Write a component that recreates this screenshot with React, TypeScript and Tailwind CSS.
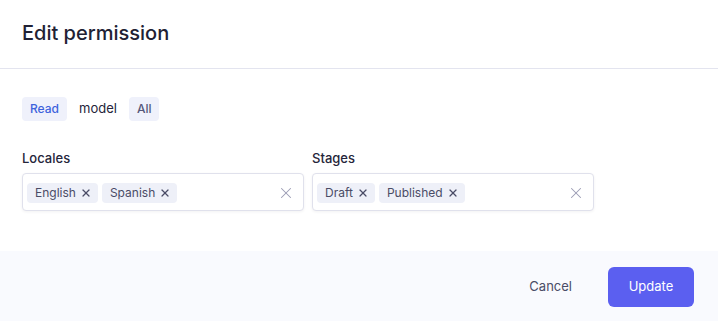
import { X } from "lucide-react";

const Tag = ({ label }: { label: string }) => (
  <span className="flex h-5 items-center gap-[4px] rounded bg-[#eef0f8] pl-2 pr-[6px] text-[12px] text-[#4a4c66]">
    {label}
    <X size={12} strokeWidth={2.4} className="text-[#4a4c66]" />
  </span>
);

const MultiSelect = ({ label, values }: { label: string; values: string[] }) => (
  <div className="flex w-[282px] flex-col">
    <span className="mb-[8px] h-[14px] text-[13px] leading-[14px] font-medium text-[#25253a]">{label}</span>
    <div className="flex h-[38px] items-center rounded border border-[#e0e1ec] bg-white pl-[4px] pr-[8px] pt-[1px] shadow-[0_1px_3px_rgba(33,33,52,0.06)]">
      <div className="flex flex-1 items-center gap-1">
        {values.map((v) => (
          <Tag key={v} label={v} />
        ))}
      </div>
      <X size={18} strokeWidth={1.4} className="text-[#9a9bb3]" />
    </div>
  </div>
);

export default function App() {
  return (
    <div className="flex h-[321px] w-[718px] flex-col bg-white font-['Inter',sans-serif]">
      <div className="flex h-[69px] items-center border-b border-[#e3e4ef] px-[22px] pb-[3px]">
        <h1 className="text-[20px] font-medium text-[#212134]">Edit permission</h1>
      </div>
      <div className="flex flex-1 flex-col px-[22px] pt-[28px]">
        <div className="flex items-center gap-3">
          <span className="flex h-6 items-center rounded bg-[#eff1fb] px-2 text-[12px] font-medium text-[#3e63dd]">Read</span>
          <span className="text-[13px] text-[#25253a]">model</span>
          <span className="flex h-6 items-center rounded bg-[#eff1fb] px-2 text-[12px] font-medium text-[#55577a]">All</span>
        </div>
        <div className="mt-[30px] flex gap-2">
          <MultiSelect label="Locales" values={["English", "Spanish"]} />
          <MultiSelect label="Stages" values={["Draft", "Published"]} />
        </div>
      </div>
      <div className="flex h-[70px] items-center justify-end gap-[18px] bg-[#f9fafe] pt-[2px] pr-6">
        <button className="px-[18px] text-[13px] text-[#4a4c66]">Cancel</button>
        <button className="h-10 w-[86px] rounded-md bg-[#5b5ff0] text-[13px] text-white">Update</button>
      </div>
    </div>
  );
}
